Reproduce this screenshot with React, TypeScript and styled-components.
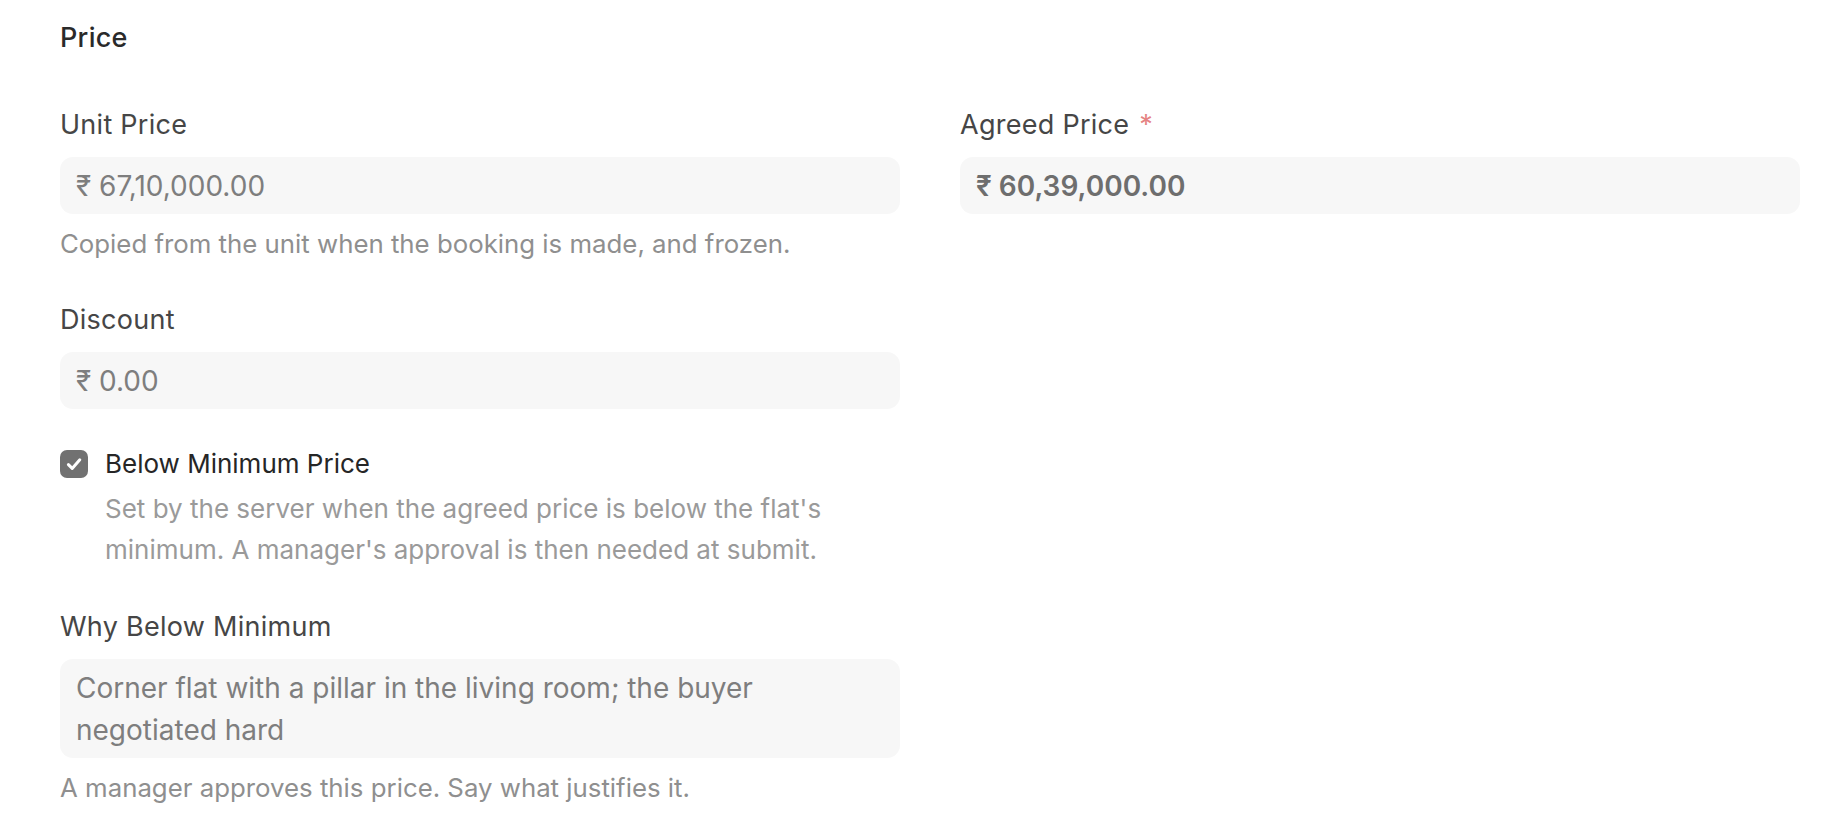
import React from "react";
import styled, { createGlobalStyle } from "styled-components";

const GlobalStyle = createGlobalStyle`
  html, body {
    margin: 0;
    padding: 0;
    background: #ffffff;
  }
  body {
    font-family: Inter, "Noto Sans", "Liberation Sans", sans-serif;
    -webkit-font-smoothing: antialiased;
  }
  * { box-sizing: border-box; }
`;

const Page = styled.main`
  width: 1844px;
  padding: 19px 44px 0 60px;
`;

const SectionTitle = styled.h2`
  margin: 0 0 53px 0;
  font-size: 27px;
  line-height: 38px;
  font-weight: 500;
  letter-spacing: 0.01em;
  color: #2a2a2a;
`;

const Columns = styled.div`
  display: grid;
  grid-template-columns: 840px 840px;
  column-gap: 60px;
  align-items: start;
`;

const Column = styled.div`
  display: flex;
  flex-direction: column;
  gap: 42px;
`;

const Field = styled.div`
  display: flex;
  flex-direction: column;
`;

const Label = styled.label`
  display: block;
  font-size: 27px;
  line-height: 30px;
  font-weight: 400;
  letter-spacing: 0.01em;
  color: #464646;
  margin-bottom: 17px;
`;

const Required = styled.span`
  color: #e58383;
  margin-left: 10px;
`;

const InputBox = styled.div<{ $strong?: boolean }>`
  height: 57px;
  display: flex;
  align-items: center;
  padding: 0 16px;
  background: #f7f7f7;
  border-radius: 13px;
  font-size: 28px;
  line-height: 34px;
  font-weight: ${(p) => (p.$strong ? 600 : 400)};
  color: ${(p) => (p.$strong ? "#6e6e6e" : "#7e7e7e")};
  white-space: nowrap;
`;

const TextArea = styled.div`
  padding: 8px 16px 7px;
  background: #f7f7f7;
  border-radius: 13px;
  font-size: 28px;
  line-height: 42px;
  font-weight: 400;
  color: #7e7e7e;
`;

const Help = styled.p`
  margin: 10px 0 0 0;
  font-size: 25.8px;
  line-height: 39px;
  color: #8f8f8f;
`;

const CheckField = styled.div`
  display: flex;
  flex-direction: column;
  margin-top: -2px;
`;

const CheckRow = styled.div`
  display: flex;
  align-items: center;
  gap: 17px;
`;

const CheckBox = styled.span`
  width: 28px;
  height: 28px;
  flex: 0 0 28px;
  border-radius: 7px;
  background: #717171;
  display: inline-flex;
  align-items: center;
  justify-content: center;
`;

const CheckLabel = styled.span`
  font-size: 26px;
  line-height: 30px;
  font-weight: 400;
  color: #262626;
`;

const CheckDescription = styled.p`
  margin: 9px 0 0 45px;
  font-size: 26px;
  line-height: 41px;
  color: #9a9a9a;
`;

export default function App() {
  return (
    <>
      <GlobalStyle />
      <Page>
        <SectionTitle>Price</SectionTitle>
        <Columns>
          <Column>
            <Field>
              <Label>Unit Price</Label>
              <InputBox>₹ 67,10,000.00</InputBox>
              <Help>Copied from the unit when the booking is made, and frozen.</Help>
            </Field>
            <Field>
              <Label>Discount</Label>
              <InputBox>₹ 0.00</InputBox>
            </Field>
            <CheckField>
              <CheckRow>
                <CheckBox>
                  <svg width="28" height="28" viewBox="0 0 28 28" fill="none">
                    <path
                      d="M8.4 14.6 L12.2 18.4 L19.8 9.8"
                      stroke="#ffffff"
                      strokeWidth="3"
                      strokeLinecap="round"
                      strokeLinejoin="round"
                    />
                  </svg>
                </CheckBox>
                <CheckLabel>Below Minimum Price</CheckLabel>
              </CheckRow>
              <CheckDescription>
                Set by the server when the agreed price is below the flat's minimum. A
                manager's approval is then needed at submit.
              </CheckDescription>
            </CheckField>
            <Field>
              <Label>Why Below Minimum</Label>
              <TextArea>
                Corner flat with a pillar in the living room; the buyer
                <br />
                negotiated hard
              </TextArea>
              <Help>A manager approves this price. Say what justifies it.</Help>
            </Field>
          </Column>
          <Column>
            <Field>
              <Label>
                Agreed Price<Required>*</Required>
              </Label>
              <InputBox $strong>₹ 60,39,000.00</InputBox>
            </Field>
          </Column>
        </Columns>
      </Page>
    </>
  );
}
